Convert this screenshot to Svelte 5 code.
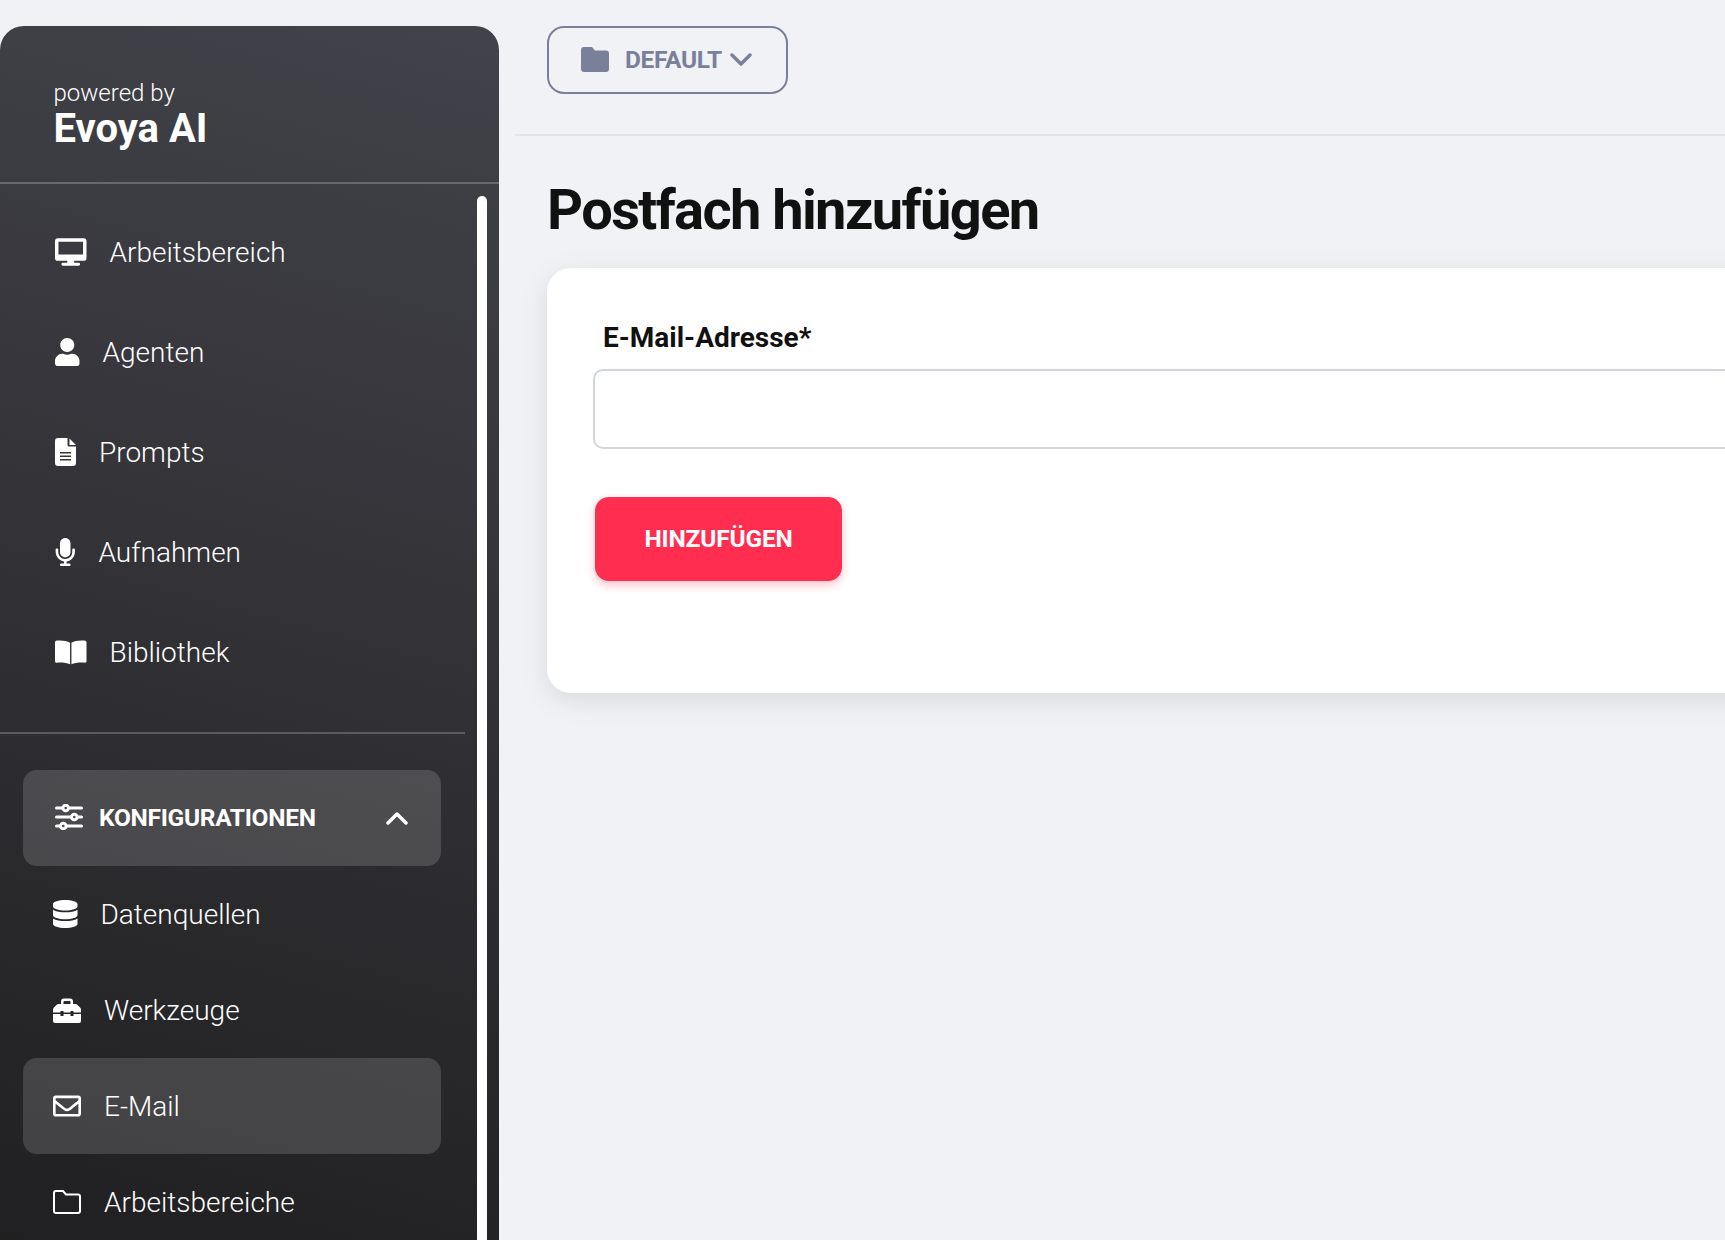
<script>
  const icons = {
    desktop: { w: 31.5, h: 28, vb: '0 0 32 28', d: 'M3 0h26a3 3 0 013 3v17a3 3 0 01-3 3H19.500v2H24a1.500 1.500 0 010 3H8a1.500 1.500 0 010-3h4.500v-2H3a3 3 0 01-3-3V3a3 3 0 013-3zM3.500 3.500v13h25v-13z' },
    user: { w: 24.5, h: 28, vb: '0 0 448 512', d: 'M224 256c70.7 0 128-57.3 128-128S294.7 0 224 0 96 57.3 96 128s57.3 128 128 128zm89.6 32h-16.7c-22.2 10.2-46.9 16-72.9 16s-50.6-5.8-72.9-16h-16.7C60.2 288 0 348.2 0 422.4V464c0 26.5 21.5 48 48 48h352c26.5 0 48-21.5 48-48v-41.6c0-74.2-60.2-134.4-134.4-134.4z' },
    file: { w: 21, h: 28, vb: '0 0 21 28', d: 'M3 0h9.500v7a1.500 1.500 0 001.500 1.500h7V25a3 3 0 01-3 3H3a3 3 0 01-3-3V3a3 3 0 013-3zM5 14v1.400h11V14zM5 17.500v1.400h11v-1.400zM5 21v1.400h11V21zM14.500.5l6.500 6.500h-6.500z' },
    mic: { w: 20.5, h: 28, vb: '0 0 352 512', d: 'M176 352c53.02 0 96-42.98 96-96V96c0-53.02-42.98-96-96-96S80 42.98 80 96v160c0 53.02 42.98 96 96 96zm160-160h-16c-8.84 0-16 7.16-16 16v48c0 74.8-64.49 134.82-140.79 127.38C96.71 376.89 48 317.11 48 250.3V208c0-8.84-7.16-16-16-16H16c-8.84 0-16 7.16-16 16v40.16c0 89.64 63.97 169.55 152 181.69V464H96c-8.84 0-16 7.16-16 16v16c0 8.84 7.16 16 16 16h160c8.84 0 16-7.16 16-16v-16c0-8.84-7.16-16-16-16h-56v-33.77C285.71 418.47 352 344.9 352 256v-48c0-8.84-7.16-16-16-16z' },
    book: { w: 31.5, h: 25, vb: '0 0 32 25', d: 'M0 2Q0 .5 2 .4C8 0 12 .8 15.300 2.500V24.500C12 22.800 6 22.200 1.500 22.800Q0 23 0 21.500zM32 2Q32 .5 30 .4C24 0 20 .8 16.700 2.500V24.500C20 22.800 26 22.200 30.500 22.800Q32 23 32 21.500z' },
    database: { w: 24.5, h: 28, vb: '0 0 448 512', d: 'M448 73.143v45.714C448 159.143 347.667 192 224 192S0 159.143 0 118.857V73.143C0 32.857 100.333 0 224 0s224 32.857 224 73.143zM448 176v102.857C448 319.143 347.667 352 224 352S0 319.143 0 278.857V176c48.125 33.143 136.208 48.572 224 48.572S399.874 209.143 448 176zm0 160v102.857C448 479.143 347.667 512 224 512S0 479.143 0 438.857V336c48.125 33.143 136.208 48.572 224 48.572S399.874 369.143 448 336z' },
    toolbox: { w: 28, h: 25, vb: '0 0 28 25', d: 'M8 6V3.500A3 3 0 0111 .5h6a3 3 0 013 3V6h-2.500V4a1 1 0 00-1-1h-5a1 1 0 00-1 1v2zM5.500 6h17a3 3 0 012 .9l2.600 2.600a3 3 0 01.9 2v3h-7.500v-1.500h-3v1.500h-7v-1.500h-3v1.500H0v-3a3 3 0 01.9-2l2.600-2.600a3 3 0 012-.9zM0 16h7.500v2h3v-2h7v2h3v-2H28v7a2 2 0 01-2 2H2a2 2 0 01-2-2z' },
    envelope: { w: 28, h: 28, vb: '0 0 512 512', d: 'M464 64H48C21.49 64 0 85.49 0 112v288c0 26.51 21.49 48 48 48h416c26.51 0 48-21.49 48-48V112c0-26.51-21.49-48-48-48zm0 48v40.805c-22.422 18.259-58.168 46.651-134.587 106.49-16.841 13.247-50.201 45.072-73.413 44.701-23.208.375-56.579-31.459-73.413-44.701C106.18 199.465 70.425 171.067 48 152.805V112h416zM48 400V214.398c22.914 18.251 55.409 43.862 104.938 82.646 21.857 17.205 60.134 55.186 103.062 54.955 42.717.231 80.509-37.199 103.053-54.947 49.528-38.783 82.032-64.401 104.947-82.653V400H48z' },
    folder: { w: 28, h: 24, vb: '0 0 28 24', d: 'M3 0h7.500l3 3.500H25a3 3 0 013 3V21a3 3 0 01-3 3H3a3 3 0 01-3-3V3a3 3 0 013-3zM2 3v18a1 1 0 001 1h22a1 1 0 001-1V6.500a1 1 0 00-1-1H12.500L9.500 2H3a1 1 0 00-1 1z' },
  }

  const mainNav = [
    { label: 'Arbeitsbereich', icon: 'desktop' },
    { label: 'Agenten', icon: 'user' },
    { label: 'Prompts', icon: 'file' },
    { label: 'Aufnahmen', icon: 'mic' },
    { label: 'Bibliothek', icon: 'book' },
  ]

  const configNav = [
    { label: 'Datenquellen', icon: 'database' },
    { label: 'Werkzeuge', icon: 'toolbox' },
    { label: 'E-Mail', icon: 'envelope', active: true },
    { label: 'Arbeitsbereiche', icon: 'folder' },
  ]
</script>

<div class="page">
  <aside class="sidebar">
    <div class="brand">
      <div class="powered">powered by</div>
      <div class="name">Evoya AI</div>
    </div>
    <div class="scroller">
      <nav class="main-nav">
        {#each mainNav as item}
          <a class="row" href="#top">
            <svg class="icon" width={icons[item.icon].w} height={icons[item.icon].h} viewBox={icons[item.icon].vb}><path fill-rule="evenodd" d={icons[item.icon].d} /></svg>
            <span>{item.label}</span>
          </a>
        {/each}
      </nav>
      <hr class="divider" />
      <div class="config-head">
        <svg class="sliders" viewBox="0 0 28 26" fill="none">
          <path d="M1.500 4h25M1.500 13h25M1.500 22h25" />
          <circle cx="10.700" cy="4" r="2.800" />
          <circle cx="19.300" cy="13" r="2.800" />
          <circle cx="8.300" cy="22" r="2.800" />
        </svg>
        <span class="config-title">KONFIGURATIONEN</span>
        <svg class="chevron-up" viewBox="0 0 22 14" fill="none"><path d="M2 12l9-9 9 9" /></svg>
      </div>
      <nav class="sub-nav">
        {#each configNav as item}
          <a class="row sub" class:active={item.active} href="#top">
            <svg class="icon" width={icons[item.icon].w} height={icons[item.icon].h} viewBox={icons[item.icon].vb}><path fill-rule="evenodd" d={icons[item.icon].d} /></svg>
            <span>{item.label}</span>
          </a>
        {/each}
      </nav>
    </div>
    <div class="thumb"></div>
  </aside>

  <main class="content">
    <div class="topbar">
      <button class="workspace">
        <svg class="folder" viewBox="0 0 28 25"><path d="M3 0h8l3 3.500h11a3 3 0 013 3V22a3 3 0 01-3 3H3a3 3 0 01-3-3V3a3 3 0 013-3z" /></svg>
        <span>DEFAULT</span>
        <svg class="chevron-down" viewBox="0 0 22 14" fill="none"><path d="M2 2l9 9 9-9" /></svg>
      </button>
    </div>
    <div class="body">
      <h1>Postfach hinzufügen</h1>
      <section class="card">
        <label for="mail">E-Mail-Adresse*</label>
        <input id="mail" type="text" />
        <button class="submit">HINZUFÜGEN</button>
      </section>
    </div>
  </main>
</div>

<style>
  :global(body) {
    margin: 0;
    background: #f0f2f5;
    font-family: Roboto, "Liberation Sans", sans-serif;
  }

  .page {
    display: flex;
    height: 1240px;
    overflow: hidden;
    background: #f0f2f5;
  }

  .sidebar {
    position: relative;
    flex: 0 0 499px;
    height: 1500px;
    margin-top: 26px;
    border-radius: 24px 24px 0 0;
    background: linear-gradient(195deg, #42424a, #191919);
    color: #fff;
  }

  .brand {
    box-sizing: border-box;
    height: 158px;
    padding: 53px 53.5px 0;
    border-bottom: 2px solid #68686d;
  }

  .powered {
    font-size: 24px;
    font-weight: 300;
    line-height: 28px;
  }

  .name {
    font-size: 40px;
    font-weight: 700;
    line-height: 44px;
  }

  .scroller {
    padding-top: 18px;
  }

  .row {
    display: flex;
    align-items: center;
    gap: 23px;
    height: 100px;
    padding-left: 55px;
    color: #fff;
    font-size: 28px;
    font-weight: 300;
    text-decoration: none;
  }

  .icon {
    flex: none;
    fill: #fff;
  }

  .divider {
    width: 465px;
    height: 2px;
    margin: 30px 0 36px;
    border: 0;
    background: #5c5c60;
  }

  .config-head {
    display: flex;
    align-items: center;
    box-sizing: border-box;
    width: 418px;
    height: 96px;
    margin-left: 23px;
    padding-left: 32px;
    border-radius: 14px;
    background: rgba(255, 255, 255, 0.15);
  }

  .sliders {
    flex: none;
    width: 28px;
    height: 26px;
    margin: -2px 16px 0 0;
  }

  .sliders path {
    stroke: #fff;
    stroke-width: 3;
    stroke-linecap: round;
  }

  .sliders circle {
    fill: #4c4c4f;
    stroke: #fff;
    stroke-width: 3;
  }

  .config-title {
    flex: 1;
    margin-top: -2px;
    font-size: 24.500px;
    font-weight: 700;
    letter-spacing: -0.3px;
  }

  .chevron-up {
    width: 22px;
    height: 14px;
    margin-right: 33px;
  }

  .chevron-up path {
    stroke: #fff;
    stroke-width: 3.500;
    stroke-linecap: round;
    stroke-linejoin: round;
  }

  .row.sub {
    width: 418px;
    height: 96px;
    box-sizing: border-box;
    margin-left: 23px;
    padding-left: 30px;
    border-radius: 14px;
  }

  .row.sub.active {
    background: rgba(255, 255, 255, 0.15);
  }

  .thumb {
    position: absolute;
    top: 170px;
    left: 477px;
    width: 10px;
    height: 1300px;
    border-radius: 5px;
    background: #fff;
  }

  .content {
    flex: 1;
    min-width: 0;
    padding-left: 16px;
  }

  .topbar {
    height: 136px;
    padding: 26px 0 0 32px;
    box-sizing: border-box;
    border-bottom: 2px solid #e2e4e8;
  }

  .workspace {
    display: flex;
    align-items: center;
    box-sizing: border-box;
    width: 241px;
    height: 68px;
    padding: 0 0 2px 32px;
    border: 2px solid #7b809a;
    border-radius: 17px;
    background: none;
    color: #7b809a;
    font: 700 24.500px Roboto, sans-serif;
    letter-spacing: -0.3px;
  }

  .folder {
    width: 28px;
    height: 25px;
    margin-right: 16px;
    fill: #7b809a;
  }

  .chevron-down {
    width: 22px;
    height: 14px;
    margin: 2px 0 0 8px;
  }

  .chevron-down path {
    stroke: #7b809a;
    stroke-width: 3.500;
    stroke-linecap: round;
    stroke-linejoin: round;
  }

  .body {
    padding-left: 32px;
  }

  h1 {
    margin: 37px 0 0;
    color: #111;
    font-size: 56px;
    font-weight: 700;
    line-height: 74px;
    letter-spacing: -1.600px;
  }

  .card {
    box-sizing: border-box;
    width: 1400px;
    height: 425px;
    margin-top: 21px;
    padding: 53px 46px;
    border-radius: 24px;
    background: #fff;
    box-shadow: 0 7px 28px rgba(0, 0, 0, 0.1);
  }

  label {
    display: block;
    margin: 0 0 15px 10px;
    color: #111;
    font-size: 28px;
    font-weight: 700;
    line-height: 33px;
  }

  input {
    display: block;
    box-sizing: border-box;
    width: 100%;
    height: 80px;
    border: 2px solid #d2d6da;
    border-radius: 10px;
    background: #fff;
    outline: none;
  }

  .submit {
    display: block;
    width: 247px;
    height: 84px;
    margin: 48px 0 0 2px;
    padding: 0 0 2px;
    border: 0;
    border-radius: 14px;
    background: #ff2e50;
    box-shadow: 0 4px 10px rgba(255, 46, 80, 0.3);
    color: #fff;
    font: 700 24.500px Roboto, sans-serif;
    letter-spacing: -0.2px;
  }
</style>
